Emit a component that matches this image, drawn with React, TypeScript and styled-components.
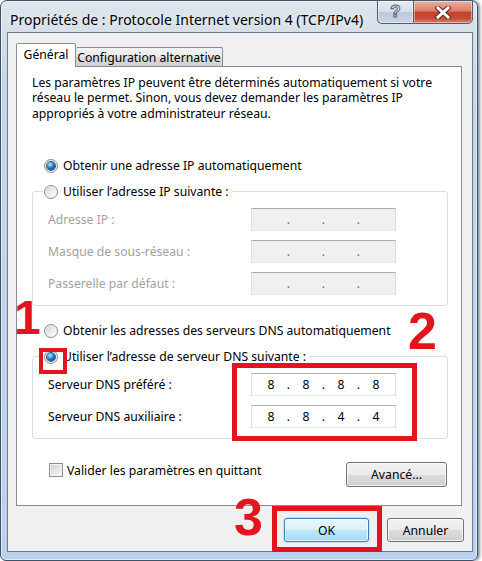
import React from 'react';
import styled, { createGlobalStyle, css } from 'styled-components';

const GlobalStyle = createGlobalStyle`
  html, body { margin: 0; padding: 0; background: #ffffff; }
  body {
    font-family: "Noto Sans", "Open Sans", sans-serif;
    font-size: 12.2px;
    color: #000;
  }
  * { box-sizing: border-box; }
`;

const Stage = styled.div`
  position: relative;
  width: 482px;
  height: 561px;
  overflow: hidden;
`;

const Window = styled.div`
  width: 478px;
  height: 561px;
  border: 1px solid #3f5165;
  border-radius: 7px 7px 6px 6px;
  background: linear-gradient(to bottom, #dfe5ec 0px, #d7dfe8 28px, #c4d7ec 80px, #bad2ed 100%);
  box-shadow: inset 0 0 0 1px rgba(255, 255, 255, 0.55), 2px 0 3px rgba(40, 55, 75, 0.55);
  display: flex;
  flex-direction: column;
`;

const TitleBar = styled.div`
  height: 31px;
  display: flex;
  align-items: flex-start;
`;

const Title = styled.div`
  margin: 10px 0 0 9px;
  font-size: 14px;
  line-height: 18px;
  color: #000;
  white-space: nowrap;
  text-shadow: 0 0 6px rgba(255, 255, 255, 0.9);
`;

const CaptionButtons = styled.div`
  margin: -1px 4px 0 auto;
  display: flex;
  height: 24px;
`;

const CaptionButton = styled.div<{ $kind: 'help' | 'close' }>`
  height: 24px;
  display: flex;
  align-items: center;
  justify-content: center;
  border: 1px solid #4d5d70;
  ${(p) =>
    p.$kind === 'help'
      ? css`
          width: 36px;
          border-radius: 0 0 0 5px;
          border-right: none;
          background: linear-gradient(to bottom, #e6ecf2 0%, #d4dde8 48%, #bccadb 52%, #c8d5e4 100%);
        `
      : css`
          width: 60px;
          border-radius: 0 0 5px 0;
          background: linear-gradient(to bottom, #eab0a3 0%, #dc7d69 45%, #c6412a 52%, #c54a33 78%, #d9806b 100%);
        `}
  box-shadow: inset 0 0 0 1px rgba(255, 255, 255, 0.45);
`;

const HelpGlyph = styled.span`
  font-family: "Liberation Sans", Arial, sans-serif;
  font-weight: bold;
  font-size: 17px;
  line-height: 1;
  color: #f4f6f8;
  margin-top: -1px;
  -webkit-text-stroke: 1px #56616e;
`;

const ClientArea = styled.div`
  margin: 0 4px 8px 6px;
  height: 520px;
  background: #f0f0f0;
  border: 1px solid #6c7d90;
  padding: 10px 10px 9px 8px;
  display: flex;
  flex-direction: column;
`;

const TabStrip = styled.div`
  height: 23px;
  display: flex;
  align-items: flex-end;
`;

const Tab = styled.div<{ $active?: boolean; $width: number }>`
  width: ${(p) => p.$width}px;
  border: 1px solid #898c95;
  border-bottom: none;
  border-radius: 2px 2px 0 0;
  display: flex;
  align-items: center;
  justify-content: center;
  white-space: nowrap;
  line-height: 15px;
  ${(p) =>
    p.$active
      ? css`
          height: 24px;
          margin-bottom: -1px;
          background: #ffffff;
          position: relative;
          z-index: 1;
          padding-bottom: 2px;
        `
      : css`
          height: 19px;
          border-left: none;
          background: linear-gradient(to bottom, #f2f2f2 0%, #ebebeb 50%, #dddddd 50%, #cfcfcf 100%);
        `}
`;

const Panel = styled.div`
  height: 440px;
  background: #ffffff;
  border: 1px solid #898c95;
  padding: 8px 13px 0 15px;
  display: flex;
  flex-direction: column;
`;

const Intro = styled.p`
  margin: 0;
  line-height: 15.3px;
  white-space: nowrap;
`;

const Option = styled.label<{ $mt?: number; $ml?: number }>`
  display: flex;
  align-items: center;
  height: 15px;
  line-height: 15px;
  margin-top: ${(p) => p.$mt ?? 0}px;
  margin-left: ${(p) => p.$ml ?? 0}px;
  gap: 5px;
  white-space: nowrap;
`;

const Radio = styled.span<{ $checked?: boolean }>`
  width: 14px;
  height: 14px;
  flex: none;
  border-radius: 50%;
  border: 1px solid #8e8f8f;
  background: linear-gradient(135deg, #cfd0d1 0%, #eeeeee 55%, #fdfdfd 100%);
  box-shadow: inset 0 0 0 1px #f2f2f2;
  display: flex;
  align-items: center;
  justify-content: center;
  &::after {
    content: '';
    display: ${(p) => (p.$checked ? 'block' : 'none')};
    width: 8px;
    height: 8px;
    border-radius: 50%;
    background: radial-gradient(circle at 38% 32%, #c4ecff 0%, #4aa7e2 30%, #0e5ea6 62%, #0a3f70 100%);
    box-shadow: 0 0 0 1px #2b5f8e;
  }
`;

const Group = styled.fieldset<{ $mt: number }>`
  margin: ${(p) => p.$mt}px 0 0 0;
  padding: 0;
  border: 1px solid #d5dfe5;
  border-radius: 3px;
  min-inline-size: 0;
`;

const GroupLegend = styled.legend`
  margin-left: 10px;
  padding: 0 3px 0 1px;
  line-height: 15px;
`;

const FieldGrid = styled.div`
  padding: 9px 15px 10px 15px;
  display: grid;
  grid-template-columns: 203px 145px;
  grid-auto-rows: 23px;
  row-gap: 9px;
  align-items: center;
`;

const FieldLabel = styled.span<{ $disabled?: boolean }>`
  color: ${(p) => (p.$disabled ? '#a2a2a2' : '#000')};
  white-space: nowrap;
`;

const IpBox = styled.div<{ $disabled?: boolean }>`
  width: 145px;
  height: 23px;
  display: flex;
  align-items: center;
  padding-left: 4px;
  border: 1px solid;
  border-color: #abadb3 #dbdfe6 #e3e9ef #dbdfe6;
  background: ${(p) => (p.$disabled ? '#f0f0f0' : '#ffffff')};
  color: ${(p) => (p.$disabled ? '#6d6d6d' : '#000')};
`;

const Octet = styled.span`
  width: 30px;
  text-align: center;
  line-height: 15px;
`;

const Dot = styled.span`
  width: 5px;
  text-align: center;
  line-height: 15px;
`;

const BottomRow = styled.div`
  margin-top: 22.5px;
  display: flex;
  justify-content: space-between;
  align-items: flex-start;
`;

const Check = styled.span`
  width: 14px;
  height: 14px;
  flex: none;
  border: 1px solid #8e8f8f;
  background: linear-gradient(135deg, #cbcbcb 0%, #e6e6e6 50%, #f7f7f7 100%);
  box-shadow: inset 0 0 0 1px #f3f3f3;
`;

const CheckOption = styled.label`
  display: flex;
  align-items: center;
  gap: 4px;
  height: 15px;
  margin: 1px 0 0 17px;
  white-space: nowrap;
`;

const Button = styled.button<{ $w: number; $h: number; $default?: boolean }>`
  width: ${(p) => p.$w}px;
  height: ${(p) => p.$h}px;
  padding: 0;
  font: inherit;
  color: #000;
  border: 1px solid #707070;
  border-radius: 3px;
  background: linear-gradient(to bottom, #f2f2f2 0%, #ebebeb 50%, #dddddd 50%, #cfcfcf 100%);
  box-shadow: inset 0 0 0 1px rgba(255, 255, 255, 0.75);
  ${(p) =>
    p.$default &&
    css`
      border-color: #3c7fb1;
      background: linear-gradient(to bottom, #eaf6fd 0%, #d9f0fc 50%, #bee6fd 50%, #a7d9f5 100%);
      box-shadow: inset 0 0 0 1px rgba(255, 255, 255, 0.7), 0 0 2px rgba(60, 160, 230, 0.6);
    `}
`;

const AdvancedButton = styled(Button)`
  margin-right: 1px;
`;

const DialogButtons = styled.div`
  margin: 12px -2px 0 0;
  display: flex;
  justify-content: flex-end;
  gap: 18px;
`;

const Mark = styled.div<{ $x: number; $y: number; $w: number; $h: number; $b: number }>`
  position: absolute;
  left: ${(p) => p.$x}px;
  top: ${(p) => p.$y}px;
  width: ${(p) => p.$w}px;
  height: ${(p) => p.$h}px;
  border: ${(p) => p.$b}px solid #e3141d;
  pointer-events: none;
`;

const Step = styled.div<{ $x: number; $y: number; $size: number }>`
  position: absolute;
  left: ${(p) => p.$x}px;
  top: ${(p) => p.$y}px;
  font-family: "Liberation Sans", Arial, sans-serif;
  font-weight: bold;
  font-size: ${(p) => p.$size}px;
  line-height: 1;
  color: #e3141d;
  pointer-events: none;
`;

const IpValue: React.FC<{ parts?: string[]; disabled?: boolean }> = ({ parts, disabled }) => {
  const vals = parts ?? ['', '', '', ''];
  return (
    <IpBox $disabled={disabled}>
      {vals.map((v, i) => (
        <React.Fragment key={i}>
          <Octet>{v}</Octet>
          {i < 3 && <Dot>.</Dot>}
        </React.Fragment>
      ))}
    </IpBox>
  );
};

const CloseIcon = () => (
  <svg width="16" height="13" viewBox="0 0 16 13">
    <path d="M3 2 L13 11 M13 2 L3 11" stroke="#5a2b22" strokeWidth="5" strokeLinecap="square" />
    <path d="M3 2 L13 11 M13 2 L3 11" stroke="#ffffff" strokeWidth="3" strokeLinecap="square" />
  </svg>
);

export default function App() {
  return (
    <Stage>
      <GlobalStyle />
      <Window>
        <TitleBar>
          <Title>Propriétés de : Protocole Internet version 4 (TCP/IPv4)</Title>
          <CaptionButtons>
            <CaptionButton $kind="help">
              <HelpGlyph>?</HelpGlyph>
            </CaptionButton>
            <CaptionButton $kind="close">
              <CloseIcon />
            </CaptionButton>
          </CaptionButtons>
        </TitleBar>
        <ClientArea>
          <TabStrip>
            <Tab $active $width={60}>Général</Tab>
            <Tab $width={147}>Configuration alternative</Tab>
          </TabStrip>
          <Panel>
            <Intro>
              Les paramètres IP peuvent être déterminés automatiquement si votre
              <br />
              réseau le permet. Sinon, vous devez demander les paramètres IP
              <br />
              appropriés à votre administrateur réseau.
            </Intro>

            <Option $mt={37.3} $ml={12}>
              <Radio $checked />
              Obtenir une adresse IP automatiquement
            </Option>

            <Group $mt={11}>
              <GroupLegend>
                <Option>
                  <Radio />
                  Utiliser l’adresse IP suivante :
                </Option>
              </GroupLegend>
              <FieldGrid>
                <FieldLabel $disabled>Adresse IP :</FieldLabel>
                <IpValue disabled />
                <FieldLabel $disabled>Masque de sous-réseau :</FieldLabel>
                <IpValue disabled />
                <FieldLabel $disabled>Passerelle par défaut :</FieldLabel>
                <IpValue disabled />
              </FieldGrid>
            </Group>

            <Option $mt={17.3} $ml={12}>
              <Radio />
              Obtenir les adresses des serveurs DNS automatiquement
            </Option>

            <Group $mt={11}>
              <GroupLegend>
                <Option>
                  <Radio $checked />
                  Utiliser l’adresse de serveur DNS suivante :
                </Option>
              </GroupLegend>
              <FieldGrid>
                <FieldLabel>Serveur DNS préféré :</FieldLabel>
                <IpValue parts={['8', '8', '8', '8']} />
                <FieldLabel>Serveur DNS auxiliaire :</FieldLabel>
                <IpValue parts={['8', '8', '4', '4']} />
              </FieldGrid>
            </Group>

            <BottomRow>
              <CheckOption>
                <Check />
                Valider les paramètres en quittant
              </CheckOption>
              <AdvancedButton $w={101} $h={25}>Avancé...</AdvancedButton>
            </BottomRow>
          </Panel>
          <DialogButtons>
            <Button $w={85} $h={24} $default>OK</Button>
            <Button $w={77} $h={24}>Annuler</Button>
          </DialogButtons>
        </ClientArea>
      </Window>

      <Step $x={14} $y={294} $size={48}>1</Step>
      <Mark $x={39} $y={348} $w={28} $h={26} $b={4} />
      <Step $x={408} $y={305} $size={52}>2</Step>
      <Mark $x={232} $y={363} $w={185} $h={78} $b={5} />
      <Step $x={234} $y={491} $size={52}>3</Step>
      <Mark $x={272} $y={506} $w={110} $h={46} $b={5} />
    </Stage>
  );
}
